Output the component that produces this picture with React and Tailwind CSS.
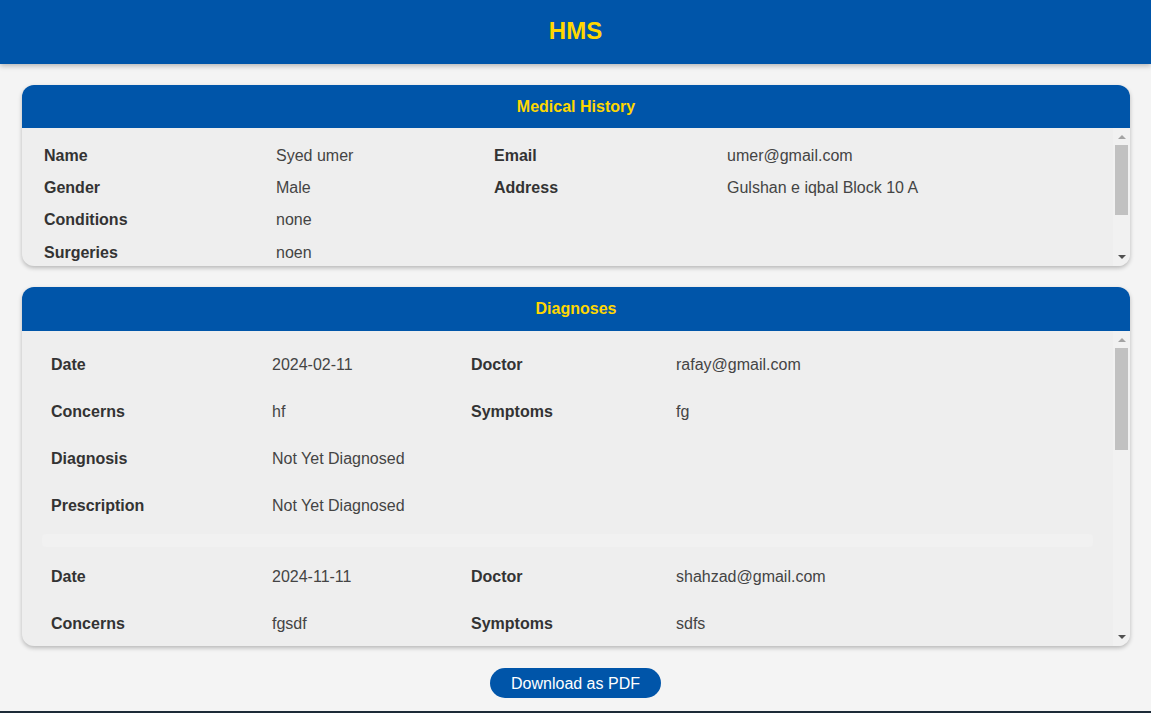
import React from "react";

const profile = [
  ["Name", "Syed umer", "Email", "umer@gmail.com"],
  ["Gender", "Male", "Address", "Gulshan e iqbal Block 10 A"],
  ["Conditions", "none", "", ""],
  ["Surgeries", "noen", "", ""],
  ["Medications", "none", "", ""],
  ["Allergies", "none", "", ""],
];

const diagnoses = [
  {
    date: "2024-02-11",
    doctor: "rafay@gmail.com",
    concerns: "hf",
    symptoms: "fg",
    diagnosis: "Not Yet Diagnosed",
    prescription: "Not Yet Diagnosed",
  },
  {
    date: "2024-11-11",
    doctor: "shahzad@gmail.com",
    concerns: "fgsdf",
    symptoms: "sdfs",
    diagnosis: "Not Yet Diagnosed",
    prescription: "Not Yet Diagnosed",
  },
  {
    date: "2024-12-02",
    doctor: "rafay@gmail.com",
    concerns: "fever",
    symptoms: "headache",
    diagnosis: "Not Yet Diagnosed",
    prescription: "Not Yet Diagnosed",
  },
];

// classic scrollbar look (headless browser hides real ones)
const Scrollbar = ({ thumbHeight }) => (
  <div className="w-[17px] shrink-0 bg-[#f1f1f1] flex flex-col items-center">
    <div className="h-[17px] w-full flex items-center justify-center">
      <svg width="8" height="5" viewBox="0 0 8 5">
        <path d="M0 5 L4 1 L8 5 Z" fill="#a3a3a3" />
      </svg>
    </div>
    <div className="flex-1 w-full px-[2px]">
      <div className={`${thumbHeight} bg-[#c1c1c1]`} />
    </div>
    <div className="h-[17px] w-full flex items-center justify-center">
      <svg width="8" height="5" viewBox="0 0 8 5">
        <path d="M0 0 L8 0 L4 4 Z" fill="#505050" />
      </svg>
    </div>
  </div>
);

const Card = ({ title, headerHeight, bodyHeight, thumbHeight, children }) => (
  <section className="ml-[22px] mr-[21px] rounded-xl overflow-hidden bg-[#eeeeee] shadow-[0_2px_4px_rgba(0,0,0,0.25)]">
    <div
      className={`${headerHeight} bg-[#0055a9] flex items-center justify-center text-[#ffd700] font-bold text-base`}
    >
      {title}
    </div>
    <div className={`${bodyHeight} flex`}>
      <div className="flex-1 min-w-0 overflow-hidden">{children}</div>
      <Scrollbar thumbHeight={thumbHeight} />
    </div>
  </section>
);

const DiagnosisEntry = ({ d }) => {
  const rows = [
    ["Date", d.date, "Doctor", d.doctor],
    ["Concerns", d.concerns, "Symptoms", d.symptoms],
    ["Diagnosis", d.diagnosis, "", ""],
    ["Prescription", d.prescription, "", ""],
  ];
  return (
    <div>
      <div className="pl-[9px] grid grid-cols-[221px_199px_205px_1fr]">
        {rows.map((r, i) => (
          <React.Fragment key={i}>
            <div className="h-[47px] flex items-center font-bold text-[#333]">{r[0]}</div>
            <div className="h-[47px] flex items-center text-[#444]">{r[1]}</div>
            <div className="h-[47px] flex items-center font-bold text-[#333]">{r[2]}</div>
            <div className="h-[47px] flex items-center text-[#444]">{r[3]}</div>
          </React.Fragment>
        ))}
      </div>
      <div className="mt-[5px] mb-[6px] h-[13px] bg-[#f1f1f1] rounded-sm" />
    </div>
  );
};

export default function App() {
  return (
    <div className="h-screen overflow-hidden bg-[#f4f4f4] font-['Liberation_Sans',Arial,sans-serif] text-base">
      <header className="h-16 bg-[#0055a9] flex items-center justify-center shadow-[0_2px_5px_rgba(0,0,0,0.25)] relative">
        <h1 className="text-2xl font-bold text-[#ffd700] -mt-[2px]">HMS</h1>
      </header>

      <main className="pt-[21px]">
        <Card
          title="Medical History"
          headerHeight="h-[43px]"
          bodyHeight="h-[138px]"
          thumbHeight="h-[70px]"
        >
          <div className="pt-[12px] pb-[10px] pl-[22px] grid grid-cols-[232px_218px_233px_1fr]">
            {profile.map((r, i) => (
              <React.Fragment key={i}>
                <div className={`${i === 3 ? "h-[33px]" : "h-8"} flex items-center font-bold text-[#333]`}>
                  {r[0]}
                </div>
                <div className={`${i === 3 ? "h-[33px]" : "h-8"} flex items-center text-[#444]`}>{r[1]}</div>
                <div className={`${i === 3 ? "h-[33px]" : "h-8"} flex items-center font-bold text-[#333]`}>
                  {r[2]}
                </div>
                <div className={`${i === 3 ? "h-[33px]" : "h-8"} flex items-center text-[#444]`}>{r[3]}</div>
              </React.Fragment>
            ))}
          </div>
        </Card>

        <div className="h-[21px]" />

        <Card
          title="Diagnoses"
          headerHeight="h-[44px]"
          bodyHeight="h-[315px]"
          thumbHeight="h-[102px]"
        >
          <div className="pt-[10px] px-5">
            {diagnoses.map((d, i) => (
              <DiagnosisEntry key={i} d={d} />
            ))}
          </div>
        </Card>

        <div className="flex justify-center mt-[22px]">
          <button className="h-[30px] pt-[2px] px-[21px] rounded-full bg-[#0055a9] text-white text-base">
            Download as PDF
          </button>
        </div>
      </main>

      <footer className="mt-[13px] h-20 bg-[#1d2b38]" />
    </div>
  );
}
